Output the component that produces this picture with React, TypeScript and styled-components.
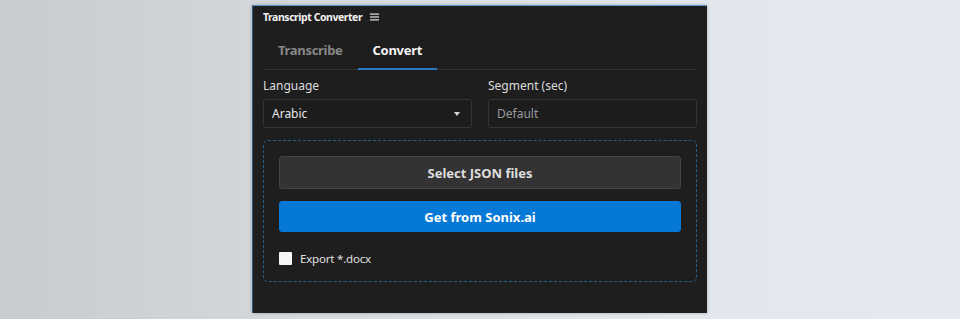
import styled, { createGlobalStyle } from 'styled-components';

const GlobalStyle = createGlobalStyle`
    html, body {
        margin: 0;
        padding: 0;
    }
    body {
        font-family: "Noto Sans", "Open Sans", sans-serif;
    }
`;

// -- COMPONENTS --
const Backdrop = styled.div`
    width: 960px;
    height: 319px;
    background: linear-gradient(90deg, #c8cbcf 0%, #d6dadd 35%, #e1e7ec 70%, #e4eaef 100%);
    display: flex;
    justify-content: flex-start;
    padding: 5px 0 0 252px;
    box-sizing: border-box;
`;

const Panel = styled.div`
    width: 455px;
    height: 308px;
    box-sizing: border-box;
    background: #1e1e1f;
    border-top: 1px solid #5a97d6;
    border-left: 1px solid #2f5f91;
    box-shadow: 0 0 3px rgba(0, 0, 0, 0.25);
    padding: 0 10px 0 10px;
    display: flex;
    flex-direction: column;
`;

const TitleBar = styled.div`
    display: flex;
    align-items: center;
    gap: 8px;
    height: 22px;
    font-size: 10.5px;
    font-weight: 700;
    color: #f2f2f2;
    letter-spacing: -0.45px;
`;

const Tabs = styled.div`
    display: flex;
    margin-top: 6px;
    border-bottom: 1px solid #343434;
`;

const Tab = styled.div<{ $active?: boolean }>`
    padding: 7px 15px 9px;
    font-size: 13px;
    font-weight: 700;
    letter-spacing: -0.3px;
    color: ${p => p.$active ? '#f4f4f4' : '#878787'};
    border-bottom: 2px solid ${p => p.$active ? '#2a7ac2' : 'transparent'};
    margin-bottom: -1px;
`;

const FieldRow = styled.div`
    display: grid;
    grid-template-columns: 1fr 1fr;
    gap: 16px;
    margin-top: 8px;
`;

const Field = styled.div`
    display: flex;
    flex-direction: column;
    gap: 5px;
`;

const Label = styled.div`
    font-size: 12px;
    color: #dcdcdc;
    line-height: 16px;
`;

const Box = styled.div<{ $muted?: boolean }>`
    height: 29px;
    box-sizing: border-box;
    border: 1px solid #353535;
    border-radius: 3px;
    background: #1c1c1d;
    display: flex;
    align-items: center;
    justify-content: space-between;
    padding: 0 9px 0 8px;
    font-size: 12px;
    color: ${p => p.$muted ? '#9a9a9a' : '#e6e6e6'};
`;

const Caret = styled.span`
    width: 0;
    height: 0;
    border-left: 3.5px solid transparent;
    border-right: 3.5px solid transparent;
    border-top: 4px solid #d8d8d8;
    margin-right: 2px;
`;

const DropZone = styled.div`
    margin-top: 12px;
    border: 1px dashed #23618f;
    border-radius: 5px;
    padding: 15px 15px 14px;
    display: flex;
    flex-direction: column;
    gap: 12px;
`;

const Button = styled.div<{ $primary?: boolean }>`
    box-sizing: border-box;
    height: ${p => p.$primary ? '31px' : '33px'};
    border-radius: 3px;
    display: flex;
    align-items: center;
    justify-content: center;
    font-size: 13px;
    font-weight: 700;
    color: ${p => p.$primary ? '#ffffff' : '#dedede'};
    background: ${p => p.$primary ? '#0678d6' : '#333334'};
    border: 1px solid ${p => p.$primary ? '#0678d6' : '#444445'};
`;

const CheckRow = styled.label`
    display: flex;
    align-items: center;
    gap: 8px;
    margin-top: 7px;
    margin-bottom: 1px;
    font-size: 11.5px;
    letter-spacing: -0.2px;
    color: #e0e0e0;
`;

const CheckSquare = styled.span`
    width: 13px;
    height: 13px;
    background: #f7f7f7;
    border-radius: 1px;
`;

const MenuIcon = () => (
    <svg width="9" height="8" viewBox="0 0 9 8">
        <rect x="0" y="0.5" width="9" height="1.2" fill="#e6e6e6" />
        <rect x="0" y="3.4" width="9" height="1.2" fill="#e6e6e6" />
        <rect x="0" y="6.3" width="9" height="1.2" fill="#e6e6e6" />
    </svg>
);

const App = () => {
    return (
        <>
            <GlobalStyle />
            <Backdrop>
                <Panel>
                    <TitleBar>
                        <span>Transcript Converter</span>
                        <MenuIcon />
                    </TitleBar>
                    <Tabs>
                        <Tab>Transcribe</Tab>
                        <Tab $active>Convert</Tab>
                    </Tabs>
                    <FieldRow>
                        <Field>
                            <Label>Language</Label>
                            <Box>
                                <span>Arabic</span>
                                <Caret />
                            </Box>
                        </Field>
                        <Field>
                            <Label>Segment (sec)</Label>
                            <Box $muted>
                                <span>Default</span>
                            </Box>
                        </Field>
                    </FieldRow>
                    <DropZone>
                        <Button>Select JSON files</Button>
                        <Button $primary>Get from Sonix.ai</Button>
                        <CheckRow>
                            <CheckSquare />
                            <span>Export *.docx</span>
                        </CheckRow>
                    </DropZone>
                </Panel>
            </Backdrop>
        </>
    );
};

export default App;
